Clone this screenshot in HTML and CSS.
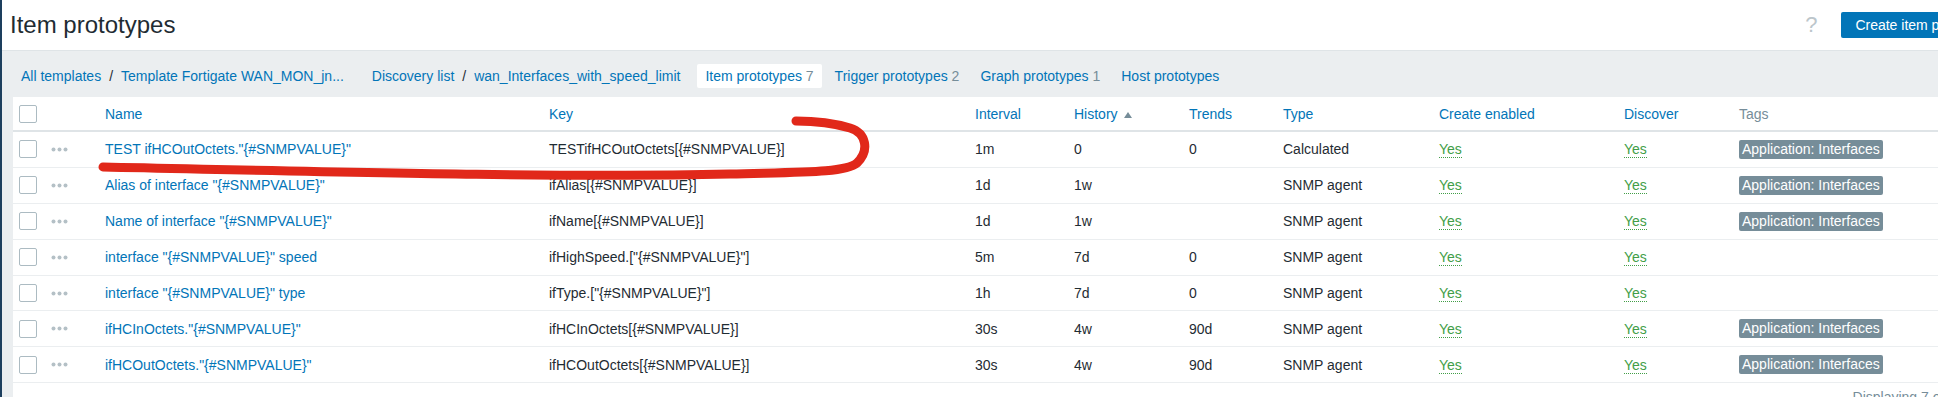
FILE: index.html
```html
<!doctype html>
<html lang="en">
    <head>
        <meta charset="UTF-8" />
        <meta name="viewport" content="width=device-width, initial-scale=1.0" />
        <title>Item prototypes</title>
        <link rel="stylesheet" href="styles.css">
    </head>
    <body>
        <div class="sidebar"></div>
        <div class="page">
            <header class="page-header">
                <h1>Item prototypes</h1>
                <div class="header-controls">
                    <span class="help">?</span>
                    <button class="btn-create">Create item prototype</button>
                </div>
            </header>
            <div class="content">
                <nav class="breadcrumbs">
                    <div class="crumbs">
                        <a href="#">All templates</a>
                        <span class="sep">/</span>
                        <a href="#">Template Fortigate WAN_MON_jn...</a>
                    </div>
                    <div class="crumbs">
                        <a href="#">Discovery list</a>
                        <span class="sep">/</span>
                        <a href="#">wan_Interfaces_with_speed_limit</a>
                    </div>
                    <div class="tabs">
                        <a href="#" class="selected">Item prototypes <span class="count">7</span></a>
                        <a href="#">Trigger prototypes <span class="count">2</span></a>
                        <a href="#">Graph prototypes <span class="count">1</span></a>
                        <a href="#">Host prototypes</a>
                    </div>
                </nav>
                <div class="table-wrap">
                    <table class="list-table">
                        <colgroup>
                            <col style="width: 32px">
                            <col style="width: 54px">
                            <col style="width: 444px">
                            <col style="width: 426px">
                            <col style="width: 99px">
                            <col style="width: 115px">
                            <col style="width: 94px">
                            <col style="width: 156px">
                            <col style="width: 185px">
                            <col style="width: 115px">
                            <col style="width: 270px">
                        </colgroup>
                        <thead>
                            <tr>
                                <th><span class="checkbox"></span></th>
                                <th></th>
                                <th>Name</th>
                                <th>Key</th>
                                <th>Interval</th>
                                <th>History<span class="sort-up"></span></th>
                                <th>Trends</th>
                                <th>Type</th>
                                <th>Create enabled</th>
                                <th>Discover</th>
                                <th class="plain">Tags</th>
                            </tr>
                        </thead>
                        <tbody>
                            <tr>
                                <td><span class="checkbox"></span></td>
                                <td><svg class="dots" width="17" height="5" viewBox="0 0 17 5"><circle cx="2.5" cy="2.5" r="2"/><circle cx="8.5" cy="2.5" r="2"/><circle cx="14.5" cy="2.5" r="2"/></svg></td>
                                <td><a href="#">TEST ifHCOutOctets."{#SNMPVALUE}"</a></td>
                                <td>TESTifHCOutOctets[{#SNMPVALUE}]</td>
                                <td>1m</td>
                                <td>0</td>
                                <td>0</td>
                                <td>Calculated</td>
                                <td><span class="yes">Yes</span></td>
                                <td><span class="yes">Yes</span></td>
                                <td><span class="tag">Application: Interfaces</span></td>
                            </tr>
                            <tr>
                                <td><span class="checkbox"></span></td>
                                <td><svg class="dots" width="17" height="5" viewBox="0 0 17 5"><circle cx="2.5" cy="2.5" r="2"/><circle cx="8.5" cy="2.5" r="2"/><circle cx="14.5" cy="2.5" r="2"/></svg></td>
                                <td><a href="#">Alias of interface "{#SNMPVALUE}"</a></td>
                                <td>ifAlias[{#SNMPVALUE}]</td>
                                <td>1d</td>
                                <td>1w</td>
                                <td></td>
                                <td>SNMP agent</td>
                                <td><span class="yes">Yes</span></td>
                                <td><span class="yes">Yes</span></td>
                                <td><span class="tag">Application: Interfaces</span></td>
                            </tr>
                            <tr>
                                <td><span class="checkbox"></span></td>
                                <td><svg class="dots" width="17" height="5" viewBox="0 0 17 5"><circle cx="2.5" cy="2.5" r="2"/><circle cx="8.5" cy="2.5" r="2"/><circle cx="14.5" cy="2.5" r="2"/></svg></td>
                                <td><a href="#">Name of interface "{#SNMPVALUE}"</a></td>
                                <td>ifName[{#SNMPVALUE}]</td>
                                <td>1d</td>
                                <td>1w</td>
                                <td></td>
                                <td>SNMP agent</td>
                                <td><span class="yes">Yes</span></td>
                                <td><span class="yes">Yes</span></td>
                                <td><span class="tag">Application: Interfaces</span></td>
                            </tr>
                            <tr>
                                <td><span class="checkbox"></span></td>
                                <td><svg class="dots" width="17" height="5" viewBox="0 0 17 5"><circle cx="2.5" cy="2.5" r="2"/><circle cx="8.5" cy="2.5" r="2"/><circle cx="14.5" cy="2.5" r="2"/></svg></td>
                                <td><a href="#">interface "{#SNMPVALUE}" speed</a></td>
                                <td>ifHighSpeed.["{#SNMPVALUE}"]</td>
                                <td>5m</td>
                                <td>7d</td>
                                <td>0</td>
                                <td>SNMP agent</td>
                                <td><span class="yes">Yes</span></td>
                                <td><span class="yes">Yes</span></td>
                                <td></td>
                            </tr>
                            <tr>
                                <td><span class="checkbox"></span></td>
                                <td><svg class="dots" width="17" height="5" viewBox="0 0 17 5"><circle cx="2.5" cy="2.5" r="2"/><circle cx="8.5" cy="2.5" r="2"/><circle cx="14.5" cy="2.5" r="2"/></svg></td>
                                <td><a href="#">interface "{#SNMPVALUE}" type</a></td>
                                <td>ifType.["{#SNMPVALUE}"]</td>
                                <td>1h</td>
                                <td>7d</td>
                                <td>0</td>
                                <td>SNMP agent</td>
                                <td><span class="yes">Yes</span></td>
                                <td><span class="yes">Yes</span></td>
                                <td></td>
                            </tr>
                            <tr>
                                <td><span class="checkbox"></span></td>
                                <td><svg class="dots" width="17" height="5" viewBox="0 0 17 5"><circle cx="2.5" cy="2.5" r="2"/><circle cx="8.5" cy="2.5" r="2"/><circle cx="14.5" cy="2.5" r="2"/></svg></td>
                                <td><a href="#">ifHCInOctets."{#SNMPVALUE}"</a></td>
                                <td>ifHCInOctets[{#SNMPVALUE}]</td>
                                <td>30s</td>
                                <td>4w</td>
                                <td>90d</td>
                                <td>SNMP agent</td>
                                <td><span class="yes">Yes</span></td>
                                <td><span class="yes">Yes</span></td>
                                <td><span class="tag">Application: Interfaces</span></td>
                            </tr>
                            <tr>
                                <td><span class="checkbox"></span></td>
                                <td><svg class="dots" width="17" height="5" viewBox="0 0 17 5"><circle cx="2.5" cy="2.5" r="2"/><circle cx="8.5" cy="2.5" r="2"/><circle cx="14.5" cy="2.5" r="2"/></svg></td>
                                <td><a href="#">ifHCOutOctets."{#SNMPVALUE}"</a></td>
                                <td>ifHCOutOctets[{#SNMPVALUE}]</td>
                                <td>30s</td>
                                <td>4w</td>
                                <td>90d</td>
                                <td>SNMP agent</td>
                                <td><span class="yes">Yes</span></td>
                                <td><span class="yes">Yes</span></td>
                                <td><span class="tag">Application: Interfaces</span></td>
                            </tr>
                        </tbody>
                    </table>
                    <div class="paging">Displaying 7 of 7 found</div>
                </div>
            </div>
        </div>
        <svg class="annotation" width="900" height="200" viewBox="0 0 900 200">
            <path d="M103,167 C300,171 550,178 730,174 C800,172 845,173 857,163 C870,150 866,133 850,128 C830,122 812,121 796,121" />
        </svg>
    </body>
</html>
```

FILE: styles.css
```css
body {
    margin: 0;
    font-family: "Liberation Sans", Arial, sans-serif;
    font-size: 14px;
    color: #1f2c33;
    background-color: #ffffff;
    display: flex;
    width: 2014px;
    height: 397px;
    overflow: hidden;
    position: relative;
}
a {
    color: #0275b8;
    text-decoration: none;
}
.sidebar {
    width: 2px;
    flex-shrink: 0;
    background-color: #1d3f5e;
}
.page {
    width: 2012px;
    flex-shrink: 0;
    display: flex;
    flex-direction: column;
}
.page-header {
    height: 50px;
    display: flex;
    align-items: center;
    justify-content: space-between;
    padding: 0 10px 0 8px;
}
.page-header h1 {
    margin: 0;
    font-size: 24px;
    font-weight: normal;
    line-height: 50px;
    color: #1f2c33;
}
.header-controls {
    display: flex;
    align-items: center;
    gap: 24px;
}
.help {
    font-size: 22px;
    color: #bcc6cb;
}
.btn-create {
    height: 26px;
    padding: 0 14px;
    background-color: #0275b8;
    color: #ffffff;
    border: none;
    border-radius: 2px;
    font-family: inherit;
    font-size: 14px;
}
.content {
    flex: 1;
    background-color: #ebeef0;
    border-top: 1px solid #dfe4e7;
    padding: 0 11px;
    display: flex;
    flex-direction: column;
}
.breadcrumbs {
    display: flex;
    align-items: center;
    height: 24px;
    padding: 13px 0 9px;
    gap: 12px;
}
.crumbs {
    display: flex;
    align-items: center;
}
.crumbs a {
    padding: 0 8px;
}
.sep {
    color: #1f2c33;
}
.tabs {
    display: flex;
    align-items: center;
    gap: 5px;
    margin-left: -3px;
}
.tabs a {
    line-height: 24px;
    padding: 0 8px;
    border-radius: 2px;
}
.tabs a.selected {
    background-color: #ffffff;
}
.count {
    color: #768d99;
}
.table-wrap {
    flex: 1;
    background-color: #ffffff;
    display: flex;
    flex-direction: column;
}
.list-table {
    border-collapse: collapse;
    table-layout: fixed;
    width: 1990px;
}
.list-table th {
    height: 33px;
    padding: 0 6px;
    text-align: left;
    font-weight: normal;
    color: #0275b8;
    border-bottom: 2px solid #dfe4e7;
    white-space: nowrap;
}
.list-table th.plain {
    color: #768d99;
}
.list-table td {
    height: 34.9px;
    padding: 0 6px;
    border-bottom: 1px solid #ebeef0;
    white-space: nowrap;
}
.checkbox {
    display: block;
    width: 16px;
    height: 16px;
    border: 1px solid #acbbc2;
    border-radius: 2px;
    background-color: #ffffff;
}
.dots {
    display: block;
    fill: #b4c0c6;
}
.sort-up {
    display: inline-block;
    margin-left: 6px;
    border-left: 4px solid transparent;
    border-right: 4px solid transparent;
    border-bottom: 6px solid #768d99;
    vertical-align: 1px;
}
.yes {
    color: #429e47;
    border-bottom: 1px dotted #429e47;
}
.tag {
    display: inline-block;
    padding: 0 3px;
    line-height: 19px;
    background-color: #768d99;
    color: #ffffff;
    border-radius: 2px;
}
.paging {
    width: 1990px;
    box-sizing: border-box;
    text-align: right;
    padding: 6px 8px;
    color: #768d99;
}
.annotation {
    position: absolute;
    left: 0;
    top: 0;
    pointer-events: none;
}
.annotation path {
    fill: none;
    stroke: #e1281a;
    stroke-width: 9;
    stroke-linecap: round;
    stroke-linejoin: round;
}
```
